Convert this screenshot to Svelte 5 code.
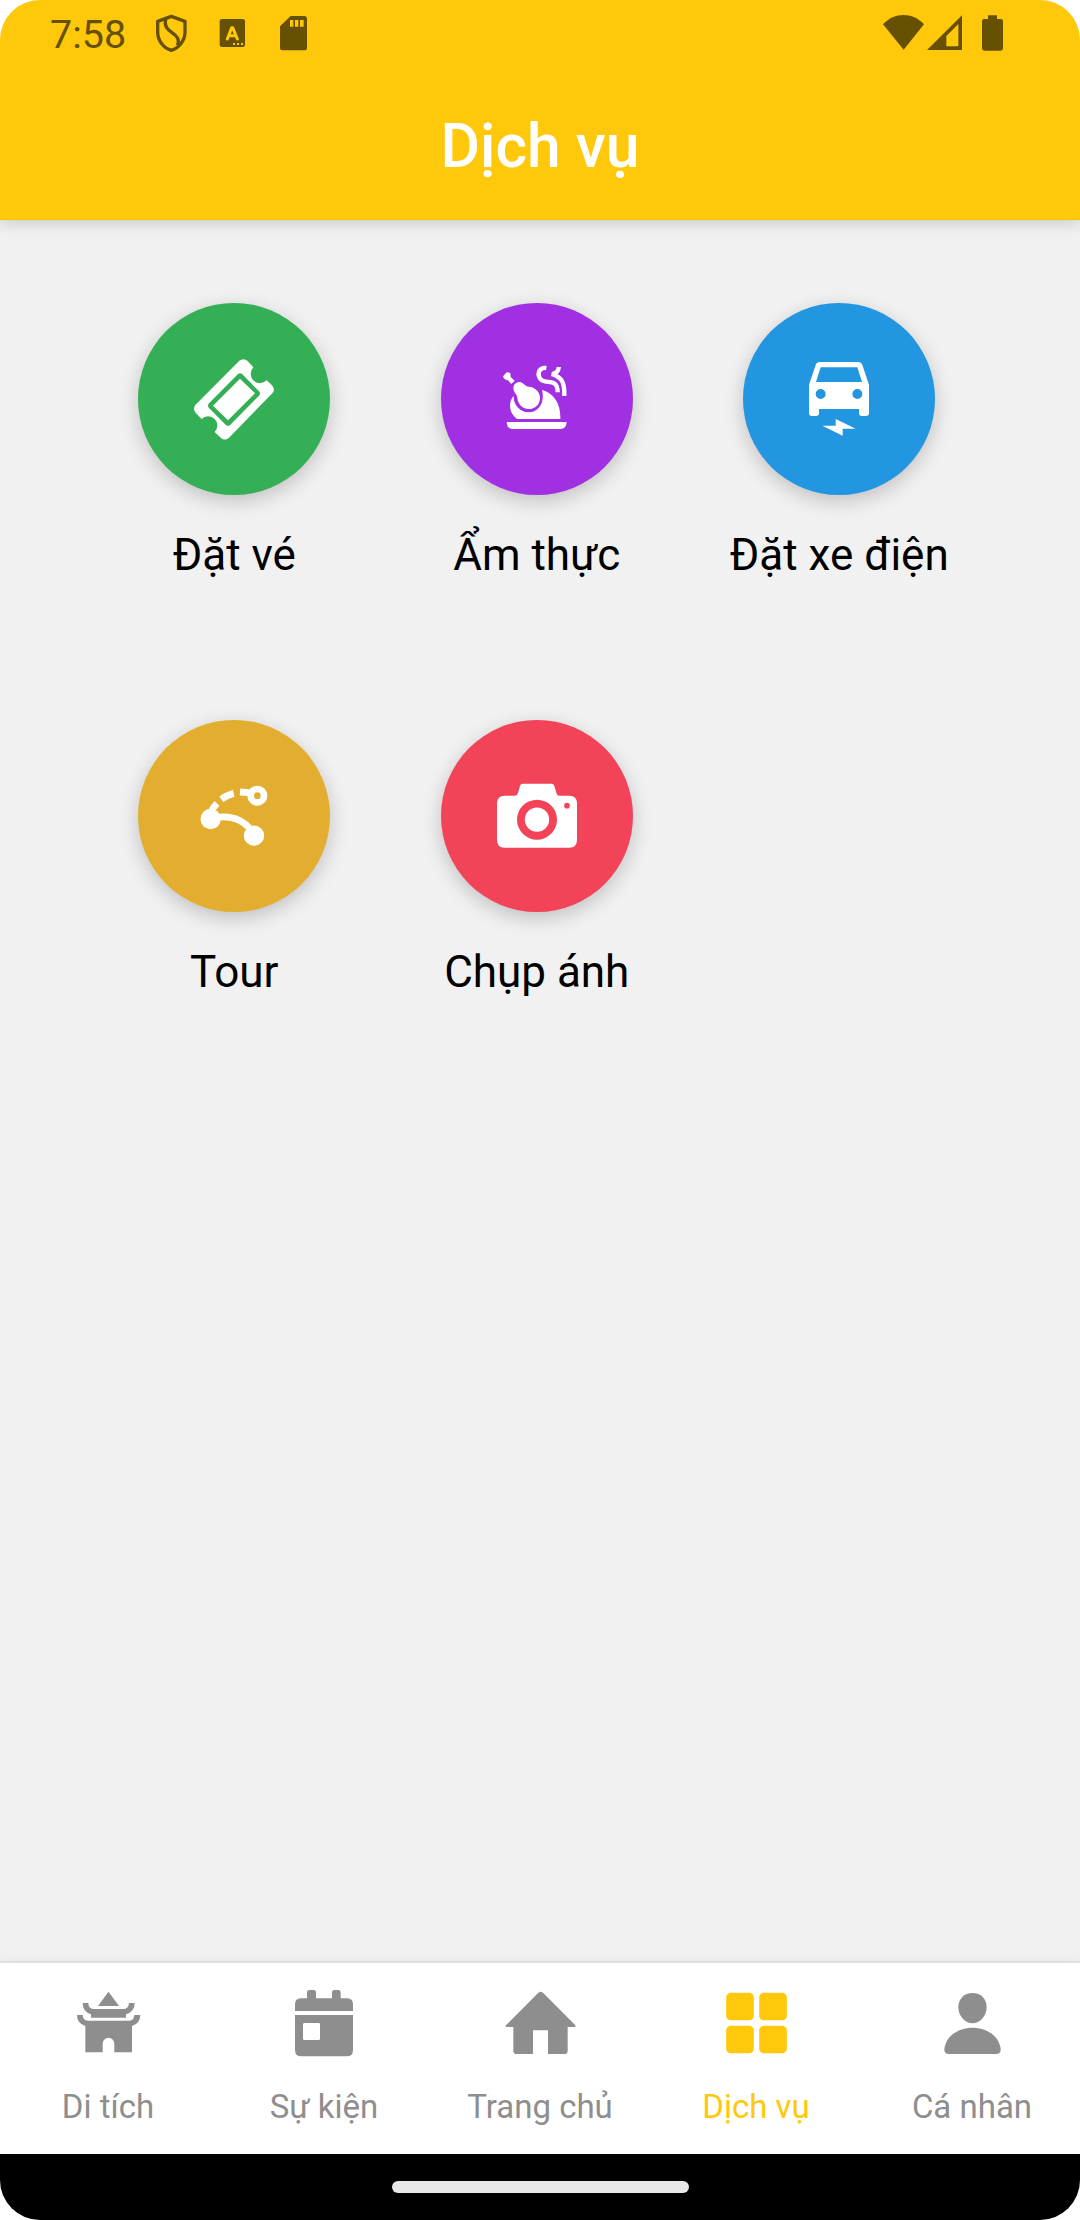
<script>
  const services = [
    { id: 'ticket', label: 'Đặt vé', tone: 'green', box: '222 207 240 240' },
    { id: 'food', label: 'Ẩm thực', tone: 'purple', box: '232 207 240 240' },
    { id: 'car', label: 'Đặt xe điện', tone: 'blue', box: '267 207 240 240' },
    { id: 'tour', label: 'Tour', tone: 'gold', box: '222 229 240 240' },
    { id: 'camera', label: 'Chụp ánh', tone: 'red', box: '231 229 240 240' },
  ];

  const tabs = [
    { id: 'relic', label: 'Di tích', box: '216 141 216 216' },
    { id: 'event', label: 'Sự kiện', box: '864 141 216 216' },
    { id: 'home', label: 'Trang chủ', box: '222 141 216 216' },
    { id: 'service', label: 'Dịch vụ', box: '870 141 216 216', active: true },
    { id: 'person', label: 'Cá nhân', box: '408 141 216 216' },
  ];
</script>

<div class="screen">
  <header>
    <div class="status">
      <span class="time">7:58</span>
      <svg class="shield" viewBox="462 42 102 117" fill="none" stroke="currentColor" stroke-width="10" stroke-linejoin="round">
        <path d="M514 49 555 64V97C555 121 537 144 514 151 490 144 473 121 473 97V64Z" />
        <path d="M497 57C492 80 502 88 516 98 532 109 540 119 532 136" />
      </svg>
      <svg class="letter" viewBox="657 42 81 117">
        <rect x="659" y="57" width="76" height="84" rx="7" fill="currentColor" />
        <path d="M682 117 695 83H698L712 117M687 107H707" fill="none" stroke="#ffc80b" stroke-width="9" stroke-linecap="round" stroke-linejoin="round" />
        <path d="M699 129h6v6h-6zM711 129h6v6h-6zM723 129h6v6h-6z" fill="#ffc80b" />
      </svg>
      <svg class="card" viewBox="837 42 90 117">
        <path d="M872 48H913Q921 48 921 56V143Q921 151 913 151H848Q840 151 840 143V79Z" fill="currentColor" />
        <path d="M870 60h10v20h-10zM885 60h10v20h-10zM900 60h11v20h-11z" fill="#ffc80b" />
      </svg>
      <span class="space"></span>
      <svg class="wifi" viewBox="189 42 126 117" fill="currentColor">
        <path d="M189 73C224 36 277 36 312 73L251 149Z" />
      </svg>
      <svg class="signal" viewBox="321 42 108 117" fill="currentColor" fill-rule="evenodd">
        <path d="M426 46V150H321ZM415 72 379 108V139H415Z" />
      </svg>
      <svg class="battery" viewBox="486 42 63 117" fill="currentColor">
        <path d="M504 46H531V57H542Q549 57 549 64V145Q549 152 542 152H493Q486 152 486 145V64Q486 57 493 57H504Z" />
      </svg>
    </div>
    <h1>Dịch vụ</h1>
  </header>

  <main>
    {#each services as s (s.id)}
      <div class="service">
        <div class="disc {s.tone}">
          <svg viewBox={s.box} fill="currentColor">
            {#if s.id === 'ticket'}
              <path fill-rule="evenodd" d="M358 212Q370 203 382 212L400 232A27 27 0 0 0 440 271L456 286Q467 298 457 310L327 443Q315 454 303 444L284 426A27 27 0 0 0 245 387L228 370Q217 358 226 345ZM354 252 267 340Q261 347 267 354L317 404Q324 411 331 404L417 317Q423 310 417 304L367 253Q360 247 354 252ZM360 266 405 310 324 391 279 347Z" />
            {:else if s.id === 'food'}
              <path d="M250 261 253 254Q257 254 259 248 265 244 272 250L273 261 285 272 275 282 264 270Q258 273 250 261Z" />
              <path d="M283 303C276 286 291 273 304 277 316 283 316 289 327 290 346 291 361 306 361 323 361 344 346 357 327 357 307 357 294 342 293 322 292 315 286 311 283 303Z" />
              <path d="M282 317C280 343 300 367 327 367 356 367 377 338 367 300 400 309 424 338 422 387H292C269 371 264 338 282 317Z" />
              <path d="M261 396H441Q440 417 423 417H279Q262 417 261 396Z" />
              <path d="M380 234C362 231 351 247 360 264 374 289 414 258 414 307M434 318C435 276 427 262 396 252" fill="none" stroke="currentColor" stroke-width="13" />
              <path d="M396 246Q411 242 411 231H424Q424 243 414 253L396 259Z" />
            {:else if s.id === 'car'}
              <path fill-rule="evenodd" d="M330 216H444Q454 216 457 225L477 284V369Q477 378 468 378H456Q447 378 447 369V357H327V369Q327 378 318 378H306Q297 378 297 369V284L317 225Q320 216 330 216ZM332 232 318 276H456L442 232ZM332 297A15 15 0 1 0 332 327 15 15 0 1 0 332 297ZM442 297A15 15 0 1 0 442 327 15 15 0 1 0 442 297Z" />
              <path d="M377 387 437 416H398V437L337 407H377Z" />
            {:else if s.id === 'tour'}
              <circle cx="272" cy="358" r="30.5" />
              <circle cx="402" cy="408" r="30.5" />
              <circle cx="412" cy="288" r="20" fill="none" stroke="currentColor" stroke-width="20" />
              <path d="M290 353Q358 345 394 393M271 341Q278 324 291 311M304 299Q321 286 341 281M360 277 388 279" fill="none" stroke="currentColor" stroke-width="20.5" />
            {:else}
              <path fill-rule="evenodd" d="M308 252H394Q401 252 403 259L409 279Q411 288 418 288H448Q471 288 471 311V421Q471 444 448 444H254Q231 444 231 421V311Q231 288 254 288H284Q292 288 294 280L300 259Q302 252 308 252ZM351 300A60 60 0 1 0 351 420 60 60 0 1 0 351 300ZM441 309.500A8.500 8.500 0 1 0 441 326.500 8.500 8.500 0 1 0 441 309.500Z" />
              <circle cx="351" cy="360" r="36.500" />
            {/if}
          </svg>
        </div>
        <span>{s.label}</span>
      </div>
    {/each}
  </main>

  <nav>
    {#each tabs as t (t.id)}
      <div class="tab" class:active={t.active}>
        <svg viewBox={t.box} fill="currentColor">
          {#if t.id === 'relic'}
            <path d="M325.500 155 357 198H294Z" />
            <path d="M248 189H265Q265 207 283 207H369Q386 207 387 189H404Q404 215 378 223V233H273V223Q248 215 248 189Z" />
            <path d="M231 225H248Q248 242 265 242H386Q403 242 403 225H421Q420 251 396 258V337H343V311A17.500 17.500 0 0 0 308 311V337H256V258Q231 250 231 225Z" />
          {:else if t.id === 'event'}
            <path d="M885 213V193Q885 175 903 175H921V157Q921 150 928 150H941Q948 150 948 157V175H996V157Q996 150 1003 150H1015Q1022 150 1022 157V175H1041Q1059 175 1059 193V213Z" />
            <path fill-rule="evenodd" d="M885 225H1059V331Q1059 349 1041 349H903Q885 349 885 331ZM913 249Q909 249 909 253V296Q909 300 913 300H956Q960 300 960 296V253Q960 249 956 249Z" />
          {:else if t.id === 'home'}
            <path d="M325 158Q332 152 339 158L436 256Q438 261 434 261H413V332Q413 342 403 342H354V271H309V342H260Q250 342 250 332V261H229Q225 260 228 256Z" />
          {:else if t.id === 'service'}
            <rect x="888.500" y="158.500" width="83" height="82.500" rx="14" />
            <rect x="987.500" y="158.500" width="83" height="82.500" rx="14" />
            <rect x="888.500" y="257.500" width="83" height="82.500" rx="14" />
            <rect x="987.500" y="257.500" width="83" height="82.500" rx="14" />
          {:else}
            <path d="M517.500 159C543 159 560 177 560 202 560 228 540 250 517.500 250 495 250 475 228 475 202 475 177 492 159 517.500 159Z" />
            <path d="M446 342C438 342 432 336 433 327 438 288 474 263 517.500 263 561 263 597 288 602 327 603 336 597 342 589 342Z" />
          {/if}
        </svg>
        <span>{t.label}</span>
      </div>
    {/each}
  </nav>
  <div class="gesture"><i></i></div>
</div>

<style>
  :global(body) {
    margin: 0;
    background: #fff;
  }
  .screen {
    width: 1080px;
    height: 2220px;
    display: flex;
    flex-direction: column;
    overflow: hidden;
    border-radius: 40px;
    background: #f1f1f1;
    font-family: Roboto, 'Noto Sans', sans-serif;
  }
  svg {
    display: block;
    flex: none;
  }
  header {
    height: 220px;
    flex: none;
    background: #ffc80b;
    box-shadow: 0 4px 14px rgba(0, 0, 0, 0.15);
  }
  .status {
    height: 66px;
    box-sizing: border-box;
    padding: 14px 77px 0 50px;
    display: flex;
    color: #665004;
  }
  .status svg {
    height: 39px;
  }
  .time {
    width: 104px;
    font-size: 39.5px;
    line-height: 42px;
  }
  .shield { width: 34px; }
  .letter { width: 27px; margin-left: 31px; }
  .card { width: 30px; margin-left: 33px; }
  .space { flex: 1; }
  .wifi { width: 42px; }
  .signal { width: 36px; margin-left: 2px; }
  .battery { width: 21px; margin-left: 19px; }
  h1 {
    margin: 45px 0 0;
    color: #fff;
    font-size: 60.5px;
    font-weight: 500;
    line-height: 71px;
    text-align: center;
  }
  main {
    flex: 1;
    display: grid;
    grid-template-columns: repeat(3, 302.5px);
    grid-auto-rows: 417.3px;
    align-content: start;
    padding: 83px 0 0 83px;
  }
  .service {
    display: flex;
    flex-direction: column;
    align-items: center;
    gap: 34px;
    font-size: 44px;
    line-height: 52px;
    color: #000;
    white-space: nowrap;
  }
  .disc {
    width: 192px;
    height: 192px;
    border-radius: 50%;
    display: grid;
    place-items: center;
    color: #fff;
    box-shadow: 0 6px 20px rgba(0, 0, 0, 0.2);
  }
  .disc svg {
    width: 80px;
    height: 80px;
    overflow: visible;
  }
  .green { background: #34af55; }
  .purple { background: #a130e3; }
  .blue { background: #2396e1; }
  .gold { background: #e3ae2f; }
  .red { background: #f24359; }
  nav {
    height: 191px;
    flex: none;
    display: grid;
    grid-template-columns: repeat(5, 1fr);
    background: #fff;
    border-top: 2px solid #e0e0e0;
    box-shadow: 0 0 10px rgba(0, 0, 0, 0.05);
  }
  .tab {
    display: flex;
    flex-direction: column;
    align-items: center;
    gap: 28px;
    padding-top: 24px;
    color: #8e8e8e;
    font-size: 33px;
    line-height: 39px;
  }
  .tab svg {
    width: 72px;
    height: 72px;
  }
  .active {
    color: #ffc80b;
  }
  .gesture {
    height: 66px;
    flex: none;
    display: grid;
    place-items: center;
    background: #000;
  }
  .gesture i {
    width: 297px;
    height: 12px;
    border-radius: 6px;
    background: #e8e8e8;
  }
</style>
